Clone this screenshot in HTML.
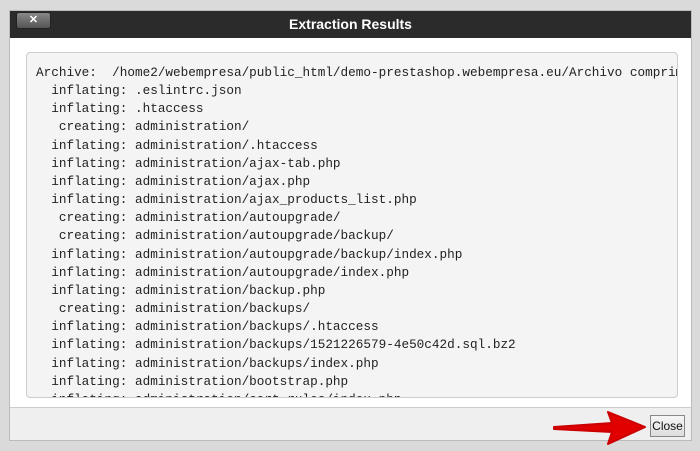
<!DOCTYPE html>
<html><head><style>
html,body{margin:0;padding:0;width:700px;height:451px;background:#dadada;overflow:hidden;font-family:"Liberation Sans",sans-serif}
.dlg{position:absolute;left:9px;top:10px;width:683px;height:431px;background:#fff;border:1px solid #bbb;box-sizing:border-box}
.hd{position:absolute;left:0;top:0;right:0;height:27px;background:#2b2b2b;color:#fff;font-weight:bold;font-size:14px;text-align:center;line-height:27px}
.x{position:absolute;left:6px;top:1px;width:33px;height:15px;background:linear-gradient(#888,#555);border-radius:3px;border:1px solid #222;color:#fff;font-size:11px;line-height:14px;text-align:center}
.box{position:absolute;left:16px;top:41px;width:650px;height:344px;background:#f4f4f4;border:1px solid #ccc;border-radius:4px;overflow:hidden}
pre{margin:0;position:absolute;left:9px;top:11px;font-family:"Liberation Mono",monospace;font-size:12.7px;line-height:18.15px;color:#222;white-space:pre}
.ft{position:absolute;left:0;right:0;bottom:0;height:32px;background:#efefef;border-top:1px solid #ccc}
.cl{position:absolute;left:640px;top:7px;width:35px;height:22px;background:linear-gradient(#f6f6f6,#ddd);border:1px solid #888;font-size:12px;line-height:20px;text-align:center;color:#111;box-sizing:border-box}
</style></head><body>
<div class="dlg">
<div class="hd">Extraction Results<div class="x">✕</div></div>
<div class="box"><pre>Archive:  /home2/webempresa/public_html/demo-prestashop.webempresa.eu/Archivo comprimido.zip
  inflating: .eslintrc.json
  inflating: .htaccess
   creating: administration/
  inflating: administration/.htaccess
  inflating: administration/ajax-tab.php
  inflating: administration/ajax.php
  inflating: administration/ajax_products_list.php
   creating: administration/autoupgrade/
   creating: administration/autoupgrade/backup/
  inflating: administration/autoupgrade/backup/index.php
  inflating: administration/autoupgrade/index.php
  inflating: administration/backup.php
   creating: administration/backups/
  inflating: administration/backups/.htaccess
  inflating: administration/backups/1521226579-4e50c42d.sql.bz2
  inflating: administration/backups/index.php
  inflating: administration/bootstrap.php
  inflating: administration/cart_rules/index.php</pre></div>
<div class="ft"><div class="cl">Close</div></div>
</div>
<svg style="position:absolute;left:550px;top:408px" width="100" height="40" viewBox="0 0 100 40">
<path d="M4 19 L62 15 L58 4 L95 19 L58 36 L62 24 L4 21 Z" fill="#e00000" stroke="#c00" stroke-linejoin="round" stroke-width="2"/>
</svg>
</body></html>
